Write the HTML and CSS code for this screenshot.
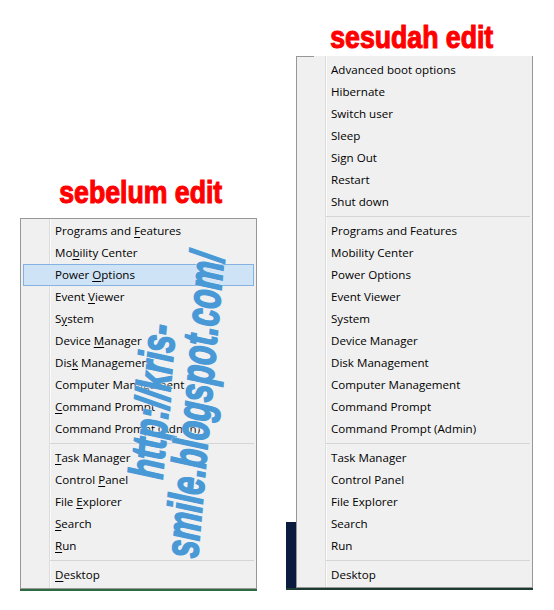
FILE: index.html
```html
<!DOCTYPE html>
<html lang="id">
<head>
<meta charset="utf-8">
<title>sebelum / sesudah edit</title>
<link rel="stylesheet" href="styles.css">
</head>
<body>
<div class="page">
  <section class="col col-before">
    <h2 class="title"><span>sebelum edit</span></h2>
    <div class="shot shot-before">
      <div class="menu">
        <div class="item">Programs and <u>F</u>eatures</div>
        <div class="item">Mo<u>b</u>ility Center</div>
        <div class="item active">Power <u>O</u>ptions</div>
        <div class="item">Event <u>V</u>iewer</div>
        <div class="item">S<u>y</u>stem</div>
        <div class="item">Device <u>M</u>anager</div>
        <div class="item">Dis<u>k</u> Management</div>
        <div class="item">Computer Mana<u>g</u>ement</div>
        <div class="item"><u>C</u>ommand Prompt</div>
        <div class="item">Command Prompt (<u>A</u>dmin)</div>
        <div class="sep"></div>
        <div class="item"><u>T</u>ask Manager</div>
        <div class="item">Control <u>P</u>anel</div>
        <div class="item">File <u>E</u>xplorer</div>
        <div class="item"><u>S</u>earch</div>
        <div class="item"><u>R</u>un</div>
        <div class="sep"></div>
        <div class="item"><u>D</u>esktop</div>
      </div>
    </div>
  </section>
  <section class="col col-after">
    <h2 class="title"><span>sesudah edit</span></h2>
    <div class="shot shot-after">
      <div class="desk-strip"></div>
      <div class="menu menu-after">
        <div class="item">Advanced boot options</div>
        <div class="item">Hibernate</div>
        <div class="item">Switch user</div>
        <div class="item">Sleep</div>
        <div class="item">Sign Out</div>
        <div class="item">Restart</div>
        <div class="item">Shut down</div>
        <div class="sep"></div>
        <div class="item">Programs and Features</div>
        <div class="item">Mobility Center</div>
        <div class="item">Power Options</div>
        <div class="item">Event Viewer</div>
        <div class="item">System</div>
        <div class="item">Device Manager</div>
        <div class="item">Disk Management</div>
        <div class="item">Computer Management</div>
        <div class="item">Command Prompt</div>
        <div class="item">Command Prompt (Admin)</div>
        <div class="sep"></div>
        <div class="item">Task Manager</div>
        <div class="item">Control Panel</div>
        <div class="item">File Explorer</div>
        <div class="item">Search</div>
        <div class="item">Run</div>
        <div class="sep"></div>
        <div class="item">Desktop</div>
      </div>
    </div>
  </section>
  <div class="watermark"><span>http://kris-</span><span>smile.blogspot.com/</span></div>
</div>
</body>
</html>
```
FILE: styles.css
```css
body {
  margin: 0;
  background: #fff;
  font-family: "Open Sans", "Noto Sans", sans-serif;
}

.page {
  position: relative;
  width: 554px;
  height: 610px;
  display: flex;
  align-items: flex-start;
  overflow: hidden;
}

.col-before {
  margin-left: 20px;
  margin-top: 177px;
  width: 237px;
}

.col-after {
  margin-left: 29px;
  margin-top: 22px;
  width: 247px;
}

.title {
  margin: 0;
  font-family: "Liberation Sans", Arial, sans-serif;
  font-weight: bold;
  font-size: 31px;
  line-height: 32px;
  color: #f00;
  text-align: center;
  white-space: nowrap;
}

.title span {
  display: inline-block;
  transform: scaleX(0.86);
  -webkit-text-stroke: 1.1px #f00;
}

.col-before .title {
  margin-bottom: 9px;
  padding-left: 5px;
}

.col-after .title {
  margin-bottom: 2px;
  padding-left: 4px;
}

.shot-before {
  border-bottom: 2px solid #2d6b45;
}

.shot-after {
  display: flex;
  align-items: flex-end;
  border-bottom: 2px solid #1d3b30;
}

.desk-strip {
  width: 10px;
  height: 66px;
  background: #0b1b3d;
}

.menu {
  box-sizing: border-box;
  width: 237px;
  border: 1px solid #979797;
  padding: 1px 2px 2px;
  background-color: #f0f0f0;
  background-image: linear-gradient(to right, transparent 28px, #dcdcdc 28px, #dcdcdc 29px, #fafafa 29px, #fafafa 30px, transparent 30px);
}

.menu-after {
  border-top: none;
  padding-top: 3px;
  padding-bottom: 1px;
  background-image:
    linear-gradient(#979797, #979797),
    linear-gradient(to right, transparent 28px, #dcdcdc 28px, #dcdcdc 29px, #fafafa 29px, #fafafa 30px, transparent 30px);
  background-size: 17px 1px, 100% 100%;
  background-repeat: no-repeat;
}

.item {
  box-sizing: border-box;
  height: 22px;
  line-height: 22px;
  padding-left: 32px;
  font-size: 11.6px;
  color: #000;
  white-space: nowrap;
}

.item u {
  text-decoration: underline;
  text-underline-offset: 2px;
}

.item.active {
  background: #cfe3f6;
  border: 1px solid #84b3e3;
  line-height: 20px;
  padding-left: 31px;
}

.sep {
  height: 7px;
  margin-left: 27px;
  background: linear-gradient(#d5d5d5, #d5d5d5) 0 3px / 100% 1px no-repeat;
}

.watermark {
  position: absolute;
  left: -76px;
  top: 361px;
  width: 500px;
  height: 84px;
  display: flex;
  flex-direction: column;
  align-items: center;
  transform: rotate(-85deg) scaleX(0.66);
  font-family: "Liberation Sans", Arial, sans-serif;
  font-style: italic;
  font-weight: bold;
  font-size: 48px;
  line-height: 42px;
  color: #4a99d7;
  white-space: nowrap;
  -webkit-text-stroke: 1.8px #4a99d7;
  text-shadow: 0 0 2px #f2f2f2, 0 0 3px #f2f2f2, 0 0 3px #f2f2f2;
}
```
